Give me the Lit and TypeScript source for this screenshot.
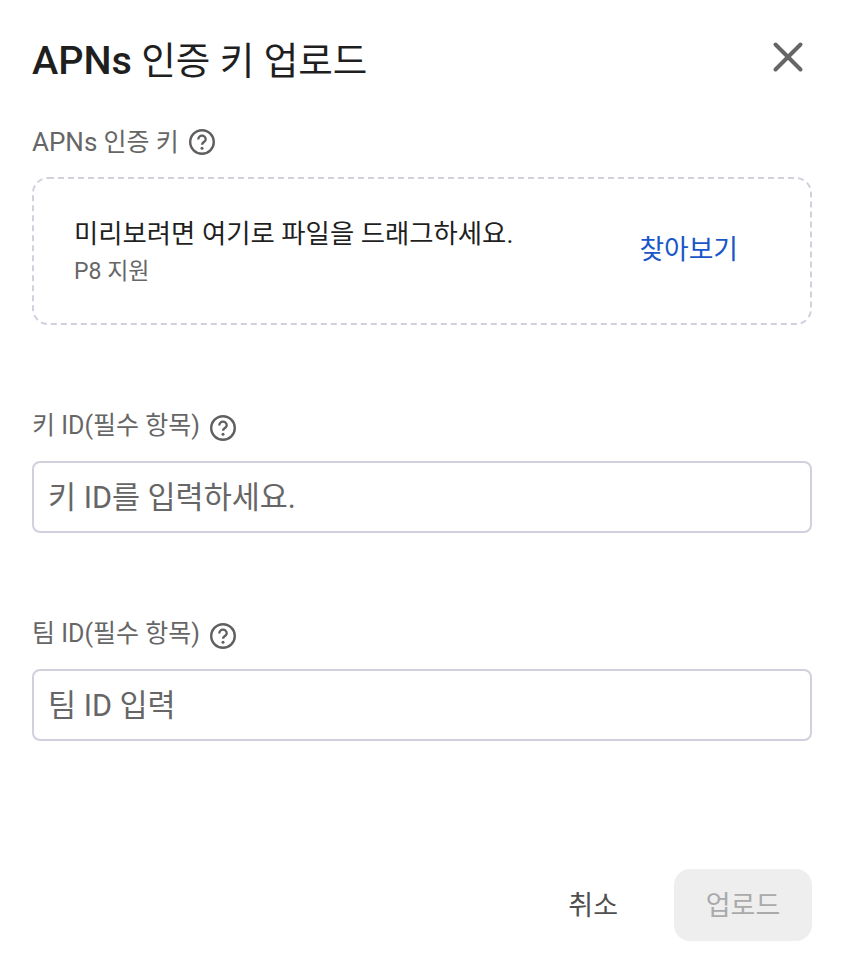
import { LitElement, html, css } from "lit";
import { customElement } from "lit/decorators.js";

const help = html`<svg class="help" viewBox="0 0 28 28" aria-hidden="true">
  <circle cx="14" cy="14" r="11.8" fill="none" stroke="#5f5f5f" stroke-width="2.4"></circle>
  <path d="M10.3 11.4a3.7 3.7 0 0 1 7.4 0c0 2.5-3.7 2.7-3.7 5.4" fill="none" stroke="#5f5f5f" stroke-width="2.3"></path>
  <circle cx="14" cy="20.2" r="1.5" fill="#5f5f5f"></circle>
</svg>`;

@customElement("app-root")
export class AppRoot extends LitElement {
  static styles = css`
    :host {
      display: block;
      width: 846px;
      height: 974px;
      background: #fff;
      font-family: Roboto, "Noto Sans CJK KR", sans-serif;
      overflow: hidden;
    }
    .dialog {
      box-sizing: border-box;
      height: 974px;
      padding: 0 34px 33px 32px;
      display: flex;
      flex-direction: column;
    }
    .head {
      height: 121px;
      display: flex;
      justify-content: space-between;
      align-items: flex-start;
      padding-top: 37px;
      box-sizing: border-box;
    }
    h1 {
      margin: 0;
      font-size: 37.6px;
      line-height: 48px;
      font-weight: 400;
      color: #1f1f1f;
    }
    h1 .latin {
      font-size: 39.6px;
      font-weight: 500;
    }
    .close {
      width: 48px;
      height: 48px;
      margin: -4px 0 0 0;
      display: block;
    }
    .label {
      display: flex;
      align-items: center;
      gap: 9px;
      height: 42px;
      font-size: 25px;
      line-height: 42px;
      color: #666666;
    }
    .label .latin {
      font-size: 26px;
    }
    .help {
      width: 28px;
      height: 28px;
      flex: none;
    }
    .field .help {
      margin-top: 3px;
    }
    .drop {
      position: relative;
      box-sizing: border-box;
      height: 148px;
      margin-top: 14px;
      border-radius: 16px;
      display: flex;
      align-items: center;
      justify-content: space-between;
      padding: 0 74px 0 42px;
    }
    .dash {
      position: absolute;
      inset: 0;
      width: 100%;
      height: 100%;
    }
    .drop-title {
      font-size: 26.4px;
      line-height: 36px;
      margin-top: 2px;
      color: #1f1f1f;
    }
    .drop-sub {
      font-size: 23px;
      line-height: 32px;
      margin-top: 4px;
      color: #666666;
    }
    .browse {
      font-size: 26.8px;
      line-height: 36px;
      margin-bottom: 2px;
      color: #1a56c9;
    }
    .field {
      margin-top: 80px;
    }
    .field .label {
      margin-bottom: 14px;
    }
    input {
      box-sizing: border-box;
      display: block;
      width: 100%;
      height: 72px;
      border: 2px solid #d0d1dd;
      border-radius: 8px;
      padding: 0 14px;
      font: inherit;
      font-size: 30.5px;
      color: #5f5f5f;
      outline: none;
      background: #fff;
    }
    input::placeholder {
      color: #666666;
      opacity: 1;
    }
    .actions {
      margin-top: auto;
      display: flex;
      justify-content: flex-end;
      align-items: center;
      gap: 32px;
    }
    button {
      height: 72px;
      border: 0;
      border-radius: 16px;
      background: none;
      font: inherit;
      font-size: 27px;
      padding-bottom: 4px;
    }
    .cancel {
      color: #4f4f4f;
      padding-left: 24px;
      padding-right: 24px;
    }
    .upload {
      width: 138px;
      background: #eeeeee;
      color: #aaaaaa;
      padding-left: 0;
      padding-right: 0;
    }
  `;

  render() {
    return html`<div class="dialog">
      <div class="head">
        <h1><span class="latin">APNs</span> 인증 키 업로드</h1>
        <svg class="close" viewBox="0 0 48 48" aria-hidden="true">
          <path d="M11.5 11.5 36.5 36.5M36.5 11.5 11.5 36.5" stroke="#666666" stroke-width="4" stroke-linecap="round" fill="none"></path>
        </svg>
      </div>
      <div class="label"><span><span class="latin">APNs</span> 인증 키</span> ${help}</div>
      <div class="drop">
        <svg class="dash" viewBox="0 0 780 148" aria-hidden="true">
          <rect x="1" y="1" width="778" height="146" rx="15" fill="none" stroke="#d0d1dd" stroke-width="2" stroke-dasharray="6 4"></rect>
        </svg>
        <div>
          <div class="drop-title">미리보려면 여기로 파일을 드래그하세요.</div>
          <div class="drop-sub">P8 지원</div>
        </div>
        <div class="browse">찾아보기</div>
      </div>
      <div class="field">
        <div class="label">키 ID(필수 항목) ${help}</div>
        <input placeholder="키 ID를 입력하세요." />
      </div>
      <div class="field">
        <div class="label">팀 ID(필수 항목) ${help}</div>
        <input placeholder="팀 ID 입력" />
      </div>
      <div class="actions">
        <button class="cancel">취소</button>
        <button class="upload" disabled>업로드</button>
      </div>
    </div>`;
  }
}
